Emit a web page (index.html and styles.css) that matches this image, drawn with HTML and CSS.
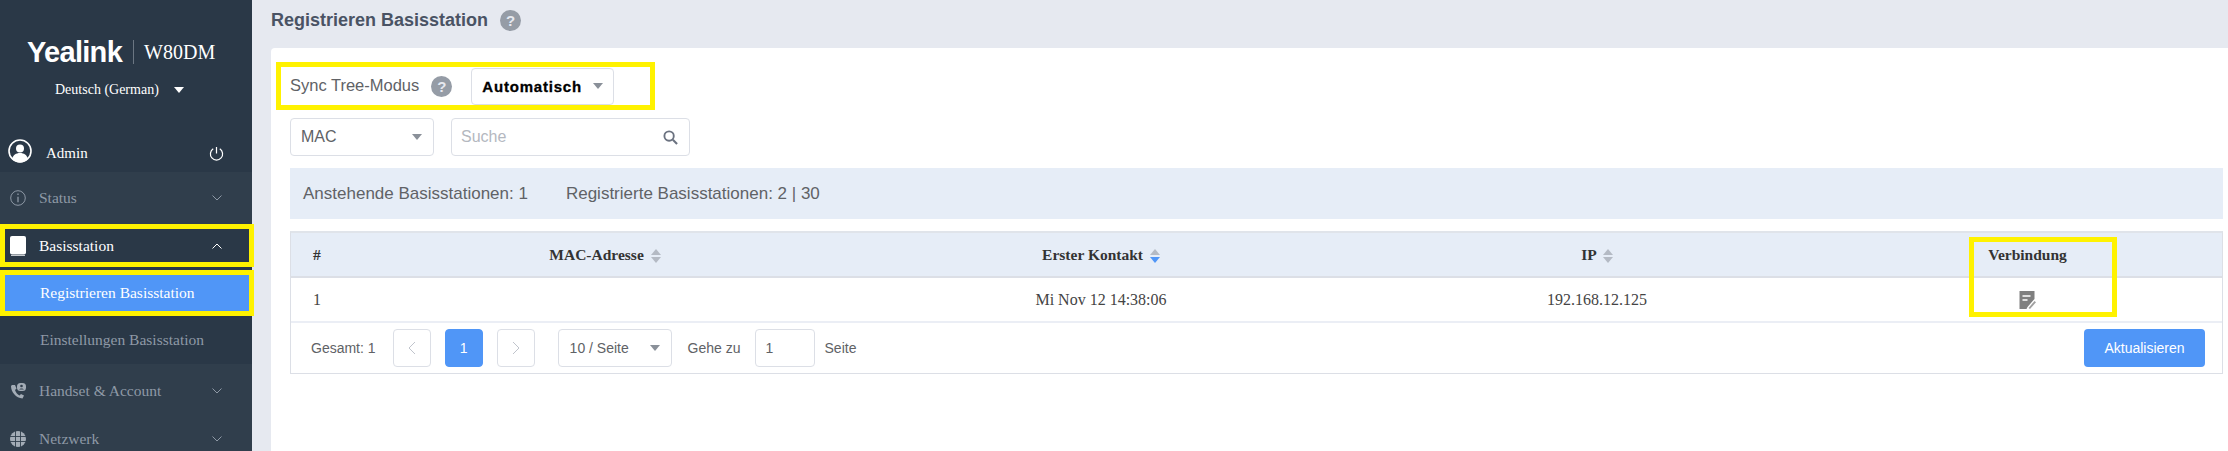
FILE: index.html
```html
<!DOCTYPE html>
<html lang="de">
<head>
    <meta charset="UTF-8">
    <title>Yealink W80DM - Registrieren Basisstation</title>
    <link rel="stylesheet" href="styles.css">
</head>
<body>
    <aside class="sidebar">
        <div class="brand">
            <span class="brand-logo">Yealink</span>
            <span class="brand-model">W80DM</span>
        </div>
        <div class="lang">
            <span>Deutsch (German)</span>
            <span class="lang-caret"></span>
        </div>
        <div class="user">
            <svg class="user-icon" viewBox="0 0 24 24">
                <circle cx="12" cy="12" r="11" fill="none" stroke="#fff" stroke-width="1.6"/>
                <circle cx="12" cy="9.5" r="4" fill="#fff"/>
                <path d="M4 20c1-4 4-6 8-6s7 2 8 6c-2 2-5 3.500-8 3.500S6 22 4 20z" fill="#fff"/>
            </svg>
            <span class="user-name">Admin</span>
            <svg class="power-icon" viewBox="0 0 16 16">
                <path d="M4.500 3a6.500 6.500 0 1 0 7 0M8 1v7" fill="none" stroke="#fff" stroke-width="1.300"/>
            </svg>
        </div>
        <nav class="nav">
            <div class="nav-item nav-status">
                <svg class="nav-icon" viewBox="0 0 16 16">
                    <circle cx="8" cy="8" r="7.300" fill="none" stroke="#8e99a6" stroke-width="1"/>
                    <path d="M8 3.500v1.500M8 6.800v5.500" stroke="#8e99a6" stroke-width="1.300"/>
                </svg>
                <span class="nav-label">Status</span>
                <svg class="chevron" viewBox="0 0 10 6"><path d="M.5.5 5 5 9.500.5" fill="none" stroke="#8e99a6"/></svg>
            </div>
            <div class="nav-item active-parent">
                <svg class="nav-icon" viewBox="0 0 16 20">
                    <rect x="0" y="0" width="16" height="18.500" rx="2" fill="#fff"/>
                    <rect x="1" y="19" width="14" height="1" fill="#c5c9ce"/>
                </svg>
                <span class="nav-label">Basisstation</span>
                <svg class="chevron" viewBox="0 0 10 6"><path d="M.5 5.500 5 1l4.500 4.500" fill="none" stroke="#fff"/></svg>
            </div>
            <div class="sub-item current">Registrieren Basisstation</div>
            <div class="sub-item">Einstellungen Basisstation</div>
            <div class="nav-item nav-handset">
                <svg class="nav-icon" viewBox="0 0 16 16">
                    <path d="M1 3c0 6 5 12 11.500 12.500l1.500-3-3-1.500-1.500 1.500C7.500 11.500 5.500 9 5 7l1.500-1.500L5 2 2 2z" fill="#a3acb6"/>
                    <rect x="7" y="0" width="9" height="8" rx="3.500" fill="#a3acb6"/>
                    <circle cx="11.500" cy="3" r="1.300" fill="#303e4c"/>
                    <path d="M9 6.500c1-1.500 4-1.500 5 0z" fill="#303e4c"/>
                </svg>
                <span class="nav-label">Handset &amp; Account</span>
                <svg class="chevron" viewBox="0 0 10 6"><path d="M.5.5 5 5 9.500.5" fill="none" stroke="#8e99a6"/></svg>
            </div>
            <div class="nav-item nav-network">
                <svg class="nav-icon" viewBox="0 0 16 16">
                    <circle cx="8" cy="8" r="8" fill="#a3acb6"/>
                    <path d="M0 5.500h16M0 10.500h16M5.500 0v16M10.500 0v16" stroke="#303e4c" stroke-width=".9"/>
                </svg>
                <span class="nav-label">Netzwerk</span>
                <svg class="chevron" viewBox="0 0 10 6"><path d="M.5.5 5 5 9.500.5" fill="none" stroke="#8e99a6"/></svg>
            </div>
        </nav>
    </aside>

    <main class="main">
        <div class="page-head">
            <h1>Registrieren Basisstation</h1>
            <span class="help help-title">?</span>
        </div>
        <section class="card">
            <div class="sync-row">
                <span class="sync-label">Sync Tree-Modus</span>
                <span class="help">?</span>
                <div class="select sync-select">
                    <span>Automatisch</span>
                    <span class="caret"></span>
                </div>
            </div>
            <div class="search-row">
                <div class="select mac-select">
                    <span>MAC</span>
                    <span class="caret"></span>
                </div>
                <div class="search">
                    <span class="search-text">Suche</span>
                    <svg class="search-icon" viewBox="0 0 16 16">
                        <circle cx="6.500" cy="6.500" r="5" fill="none" stroke="#6b7280" stroke-width="2"/>
                        <path d="m10.500 10.500 4.500 4.500" stroke="#6b7280" stroke-width="2.200"/>
                    </svg>
                </div>
            </div>
            <div class="info-bar">
                <span>Anstehende Basisstationen: 1</span>
                <span>Registrierte Basisstationen: 2 | 30</span>
            </div>
            <div class="table-wrap">
                <table class="table">
                    <colgroup>
                        <col class="col-num">
                        <col class="col-main">
                        <col class="col-main">
                        <col class="col-main">
                        <col>
                    </colgroup>
                    <thead>
                        <tr>
                            <th class="cell-num">#</th>
                            <th>MAC-Adresse <span class="sort"><i class="sort-up"></i><i class="sort-down"></i></span></th>
                            <th>Erster Kontakt <span class="sort"><i class="sort-up"></i><i class="sort-down on"></i></span></th>
                            <th>IP <span class="sort"><i class="sort-up"></i><i class="sort-down"></i></span></th>
                            <th class="cell-link">Verbindung</th>
                        </tr>
                    </thead>
                    <tbody>
                        <tr>
                            <td class="cell-num">1</td>
                            <td></td>
                            <td>Mi Nov 12 14:38:06</td>
                            <td>192.168.12.125</td>
                            <td class="cell-link">
                                <svg class="edit-icon" viewBox="0 0 16 18">
                                    <path d="M0 0h15v8l-7 8-1 2H0z" fill="#808080"/>
                                    <path d="M3 5h8M3 9h5" stroke="#fff" stroke-width="1.400"/>
                                    <path d="m9 17 6-7 1.500 1.300-6 6.700z" fill="#a0a0a0"/>
                                </svg>
                            </td>
                        </tr>
                    </tbody>
                </table>
                <div class="pager">
                    <span class="pager-total">Gesamt: 1</span>
                    <span class="page-btn"><svg viewBox="0 0 8 14"><path d="M7 1 1 7l6 6" fill="none" stroke="#c0c4cc"/></svg></span>
                    <span class="page-btn page-on">1</span>
                    <span class="page-btn"><svg viewBox="0 0 8 14"><path d="m1 1 6 6-6 6" fill="none" stroke="#c0c4cc"/></svg></span>
                    <div class="select size-select">
                        <span>10 / Seite</span>
                        <span class="caret"></span>
                    </div>
                    <span class="pager-goto">Gehe zu</span>
                    <span class="goto-input">1</span>
                    <span>Seite</span>
                    <button class="refresh">Aktualisieren</button>
                </div>
                <div class="mark-column"></div>
            </div>
        </section>
    </main>
</body>
</html>
```

FILE: styles.css
```css
html, body {
    height: 451px;
    overflow: hidden;
}

body {
    display: flex;
    margin: 0;
    background-color: #e6e9f0;
    font-family: 'Liberation Sans', Arial, sans-serif;
    color: #606266;
}

.sidebar {
    flex: 0 0 252px;
    width: 252px;
    height: 451px;
    background-color: #2a3847;
    font-family: 'Liberation Serif', serif;
    color: #fff;
}

.brand {
    display: flex;
    align-items: center;
    gap: 10px;
    height: 34px;
    padding: 35px 0 0 27px;
}

.brand-logo {
    padding-right: 11px;
    border-right: 1px solid #6b7682;
    font-family: 'Liberation Sans', sans-serif;
    font-size: 29px;
    font-weight: bold;
    letter-spacing: -.7px;
    line-height: 24px;
}

.brand-model {
    font-size: 20px;
}

.lang {
    display: flex;
    align-items: center;
    justify-content: space-between;
    box-sizing: border-box;
    width: 130px;
    height: 24px;
    margin: 9px 0 0 55px;
    font-size: 14px;
}

.lang-caret {
    border-left: 5px solid transparent;
    border-right: 5px solid transparent;
    border-top: 6px solid #fff;
    margin-right: 1px;
}

.user {
    display: flex;
    align-items: center;
    height: 30px;
    margin: 36px 0 4px;
    padding-left: 8px;
}

.user-icon {
    width: 24px;
    height: 24px;
    margin-bottom: 4px;
}

.user-name {
    margin-left: 14px;
    font-size: 15px;
}

.power-icon {
    width: 15px;
    height: 15px;
    margin-left: 121px;
}

.nav-item {
    display: flex;
    align-items: center;
    padding-left: 10px;
    background-color: #303e4c;
    color: #8e99a6;
    font-size: 15.500px;
}

.nav-status {
    height: 52px;
}

.nav-handset {
    height: 48px;
    padding-top: 3px;
}

.nav-network {
    height: 48px;
}

.nav-icon {
    flex: 0 0 16px;
    width: 16px;
    height: 16px;
}

.nav-label {
    flex: 0 0 168px;
    margin-left: 13px;
}

.chevron {
    width: 10px;
    height: 6px;
    margin-left: 5px;
}

.active-parent {
    position: relative;
    box-sizing: border-box;
    width: 254px;
    height: 43px;
    padding-left: 5px;
    border: 5px solid #fff200;
    background-color: #2a3847;
    color: #fff;
}

.active-parent .nav-icon {
    height: 20px;
}

.sub-item {
    display: flex;
    align-items: center;
    height: 48px;
    padding-left: 40px;
    background-color: #2a3847;
    color: #8e99a6;
    font-size: 15.500px;
}

.sub-item.current {
    position: relative;
    box-sizing: border-box;
    width: 254px;
    height: 46px;
    margin-top: 3px;
    padding-left: 35px;
    border: 5px solid #fff200;
    background-color: #5096f7;
    color: #fff;
}

.main {
    flex: 1;
    min-width: 0;
    padding-left: 19px;
}

.page-head {
    display: flex;
    align-items: center;
    height: 40px;
    margin-bottom: 8px;
}

.page-head h1 {
    margin: 0;
    font-size: 18px;
    font-weight: bold;
    color: #4a5364;
}

.help {
    display: inline-block;
    flex: 0 0 21px;
    width: 21px;
    height: 21px;
    border-radius: 50%;
    background-color: #959ca6;
    color: #e6e9f0;
    font-size: 15px;
    font-weight: bold;
    line-height: 21px;
    text-align: center;
}

.help-title {
    margin-left: 12px;
}

.card {
    height: 403px;
    box-sizing: border-box;
    padding: 14px 5px 0 19px;
    border-radius: 4px 0 0 0;
    background-color: #fff;
}

.sync-row {
    display: flex;
    align-items: center;
    box-sizing: border-box;
    width: 379px;
    height: 48px;
    margin-left: -14px;
    padding-left: 9px;
    border: 5px solid #fff200;
}

.sync-label {
    margin-bottom: 2px;
    font-size: 16.500px;
    color: #606266;
}

.sync-row .help {
    margin-left: 12px;
}

.select {
    display: flex;
    align-items: center;
    justify-content: space-between;
    box-sizing: border-box;
    height: 38px;
    border: 1px solid #dcdfe6;
    border-radius: 4px;
    background-color: #fff;
}

.sync-select {
    width: 143px;
    height: 37px;
    margin-left: 19px;
    padding: 0 10px;
    color: #000;
    font-size: 15px;
    font-weight: bold;
    letter-spacing: .8px;
    -webkit-text-stroke: .3px #000;
}

.caret {
    border-left: 5px solid transparent;
    border-right: 5px solid transparent;
    border-top: 6px solid #8a9099;
}

.search-row {
    display: flex;
    gap: 17px;
    margin-top: 8px;
}

.mac-select {
    width: 144px;
    padding: 0 11px 0 10px;
    font-size: 16px;
}

.search {
    display: flex;
    align-items: center;
    justify-content: space-between;
    box-sizing: border-box;
    width: 239px;
    height: 38px;
    padding: 0 11px 0 9px;
    border: 1px solid #dcdfe6;
    border-radius: 4px;
    font-size: 16px;
    color: #b4b8bf;
}

.search-icon {
    width: 15px;
    height: 15px;
}

.info-bar {
    display: flex;
    align-items: center;
    gap: 38px;
    height: 51px;
    margin-top: 12px;
    padding-left: 13px;
    background-color: #e6edf7;
    font-size: 17px;
    color: #606266;
}

.table-wrap {
    position: relative;
    margin-top: 12px;
    border: 1px solid #dcdfe6;
    border-top-width: 2px;
    border-top-color: #e0e4ea;
}

.table {
    width: 100%;
    border-collapse: collapse;
    table-layout: fixed;
    font-family: 'Liberation Serif', serif;
    font-size: 16px;
    color: #444;
}

.col-num {
    width: 66px;
}

.col-main {
    width: 496px;
}

.table th {
    height: 43px;
    padding: 0;
    border-bottom: 2px solid #dcdfe6;
    background-color: #e6edf7;
    font-size: 15.500px;
    font-weight: bold;
    color: #333;
    text-align: center;
}

.table td {
    height: 43px;
    padding: 0;
    border-bottom: 2px solid #ebeef5;
    text-align: center;
}

.table .cell-num {
    padding-left: 22px;
    text-align: left;
}

.table .cell-link {
    padding-right: 12px;
}

.sort {
    display: inline-flex;
    flex-direction: column;
    gap: 2px;
    margin-left: 3px;
    vertical-align: middle;
}

.sort i {
    display: block;
    border-left: 5px solid transparent;
    border-right: 5px solid transparent;
}

.sort-up {
    border-bottom: 6px solid #b4bac4;
}

.sort-down {
    border-top: 6px solid #b4bac4;
}

.sort-down.on {
    border-top-color: #5096f7;
}

.edit-icon {
    width: 17px;
    height: 18px;
    vertical-align: middle;
}

.pager {
    display: flex;
    align-items: center;
    height: 50px;
    padding: 0 17px 0 20px;
    font-size: 14px;
    color: #606266;
}

.pager-total {
    margin-right: 17px;
}

.page-btn {
    display: flex;
    align-items: center;
    justify-content: center;
    box-sizing: border-box;
    width: 38px;
    height: 38px;
    margin-right: 14px;
    border: 1px solid #dcdfe6;
    border-radius: 4px;
}

.page-btn svg {
    width: 8px;
    height: 14px;
}

.page-on {
    border-color: #5096f7;
    background-color: #5096f7;
    color: #fff;
}

.size-select {
    width: 114px;
    margin-left: 9px;
    padding: 0 11px;
}

.pager-goto {
    margin: 0 14px 0 16px;
}

.goto-input {
    box-sizing: border-box;
    width: 60px;
    height: 38px;
    margin-right: 10px;
    padding-left: 10px;
    border: 1px solid #dcdfe6;
    border-radius: 4px;
    line-height: 36px;
}

.refresh {
    width: 121px;
    height: 38px;
    margin-left: auto;
    border: none;
    border-radius: 4px;
    background-color: #5096f7;
    color: #fff;
    font-family: 'Liberation Sans', sans-serif;
    font-size: 14px;
}

.mark-column {
    position: absolute;
    top: 4px;
    left: 1678px;
    box-sizing: border-box;
    width: 148px;
    height: 80px;
    border: 5px solid #fff200;
}
```
